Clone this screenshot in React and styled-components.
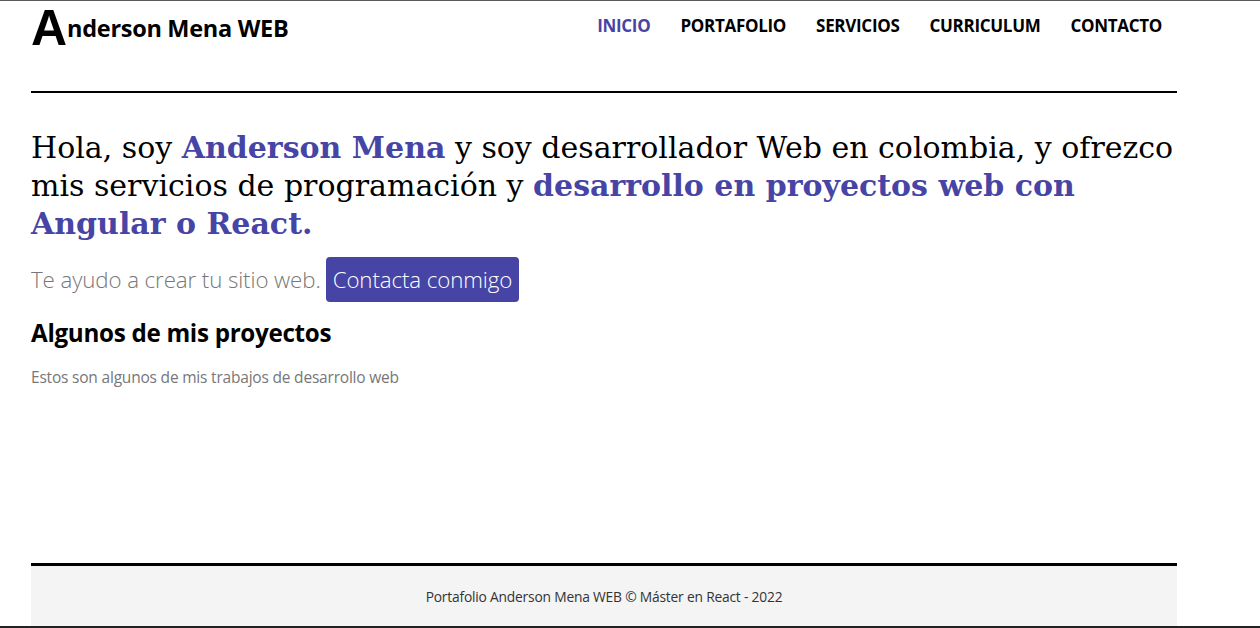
import React from 'react';
import styled, { createGlobalStyle } from 'styled-components';

const GlobalStyle = createGlobalStyle`
  html, body {
    margin: 0;
    padding: 0;
    background: #fff;
  }
  * {
    box-sizing: border-box;
  }
`;

const Page = styled.div`
  height: 100vh;
  display: flex;
  flex-direction: column;
  border-top: 1px solid #5a5a5a;
  border-bottom: 2px solid #222;
  font-family: "Open Sans", "Noto Sans", sans-serif;
`;

const Wrap = styled.div`
  width: 1146px;
  margin-left: 31px;
  flex: 1;
  display: flex;
  flex-direction: column;
`;

const Header = styled.header`
  height: 92px;
  display: flex;
  justify-content: space-between;
  align-items: flex-start;
  border-bottom: 2px solid #000;
`;

const Logo = styled.div`
  padding-top: 2px;
  font-family: "Open Sans", sans-serif;
  font-weight: 700;
  font-size: 23.5px;
  line-height: 30px;
  color: #000;
  letter-spacing: -0.3px;
  white-space: nowrap;
`;

const BigA = styled.span`
  display: inline-block;
  font-family: "Liberation Sans", Arial, sans-serif;
  font-weight: 700;
  font-size: 50px;
  line-height: 50px;
  vertical-align: -8px;
  margin-right: 0;
  letter-spacing: 0;
`;

const Nav = styled.nav`
  display: flex;
  gap: 30px;
  padding-top: 13px;
  padding-right: 15px;
`;

const NavLink = styled.a`
  font-family: "Open Sans", sans-serif;
  font-weight: 700;
  font-size: 17px;
  letter-spacing: -0.3px;
  text-decoration: none;
  color: ${p => (p.$active ? '#4645a5' : '#000')};
  cursor: pointer;
`;

const Main = styled.main`
  flex: 1;
  padding-top: 36px;
`;

const Hero = styled.h1`
  margin: 0;
  font-family: "DejaVu Serif", Georgia, serif;
  font-weight: 400;
  font-size: 30px;
  line-height: 38px;
  color: #000;
`;

const Accent = styled.strong`
  color: #4645a5;
  font-weight: 700;
`;

const Lead = styled.div`
  display: flex;
  align-items: center;
  gap: 5px;
  margin-top: 14px;
  font-family: "Open Sans", sans-serif;
  font-weight: 300;
  font-size: 22.3px;
  letter-spacing: -0.1px;
  color: #777;
`;

const ContactButton = styled.a`
  background: #4645a5;
  color: #fff;
  border-radius: 4px;
  padding: 0 7px;
  height: 45px;
  display: flex;
  align-items: center;
  font-weight: 300;
  text-decoration: none;
`;

const SectionTitle = styled.h2`
  margin: 14px 0 0;
  font-family: "Open Sans", sans-serif;
  font-weight: 700;
  font-size: 24.2px;
  letter-spacing: -0.3px;
  color: #000;
`;

const SectionText = styled.p`
  margin: 17px 0 0;
  font-family: "Open Sans", sans-serif;
  font-size: 15.5px;
  color: #777;
  letter-spacing: -0.2px;
`;

const Footer = styled.footer`
  height: 63px;
  border-top: 3px solid #000;
  background: #f4f4f4;
  display: flex;
  align-items: center;
  justify-content: center;
  font-family: "Open Sans", sans-serif;
  font-size: 13.8px;
  color: #333;
  letter-spacing: -0.2px;
`;

const links = ['Inicio', 'Portafolio', 'Servicios', 'Curriculum', 'Contacto'];

export default function App() {
  return (
    <>
      <GlobalStyle />
      <Page>
        <Wrap>
          <Header>
            <Logo>
              <BigA>A</BigA>nderson Mena WEB
            </Logo>
            <Nav>
              {links.map((l, i) => (
                <NavLink key={l} $active={i === 0}>
                  {l.toUpperCase()}
                </NavLink>
              ))}
            </Nav>
          </Header>
          <Main>
            <Hero>
              Hola, soy <Accent>Anderson Mena</Accent> y soy desarrollador Web en colombia, y ofrezco mis
              servicios de programación y <Accent>desarrollo en proyectos web con Angular o React.</Accent>
            </Hero>
            <Lead>
              Te ayudo a crear tu sitio web.
              <ContactButton>Contacta conmigo</ContactButton>
            </Lead>
            <SectionTitle>Algunos de mis proyectos</SectionTitle>
            <SectionText>Estos son algunos de mis trabajos de desarrollo web</SectionText>
          </Main>
          <Footer>Portafolio Anderson Mena WEB © Máster en React - 2022</Footer>
        </Wrap>
      </Page>
    </>
  );
}
